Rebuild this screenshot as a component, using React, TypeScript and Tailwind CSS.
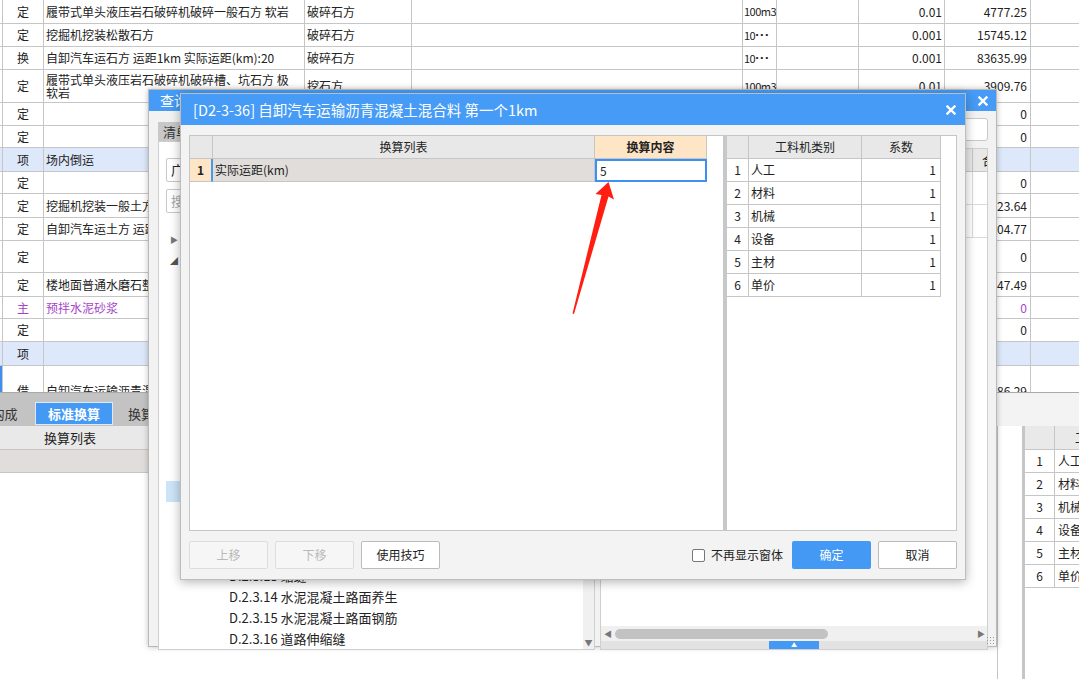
import React from "react";

type SheetRow = {
  t: string;
  name?: React.ReactNode;
  c3?: string;
  unit?: React.ReactNode;
  qty?: string;
  price?: string;
  h: string;
  blue?: boolean;
  purple?: boolean;
};

const dots = (
  <>
    10<span className="font-['Liberation_Sans',sans-serif] font-bold text-[13px] tracking-[0.5px]">···</span>
  </>
);

const sheetRows: SheetRow[] = [
  { t: "定", name: "履带式单头液压岩石破碎机破碎一般石方 软岩", c3: "破碎石方", unit: "100m3", qty: "0.01", price: "4777.25", h: "h-[24px]" },
  { t: "定", name: "挖掘机挖装松散石方", c3: "破碎石方", unit: dots, qty: "0.001", price: "15745.12", h: "h-[23px]" },
  { t: "换", name: "自卸汽车运石方 运距1km  实际运距(km):20", c3: "破碎石方", unit: dots, qty: "0.001", price: "83635.99", h: "h-[23px]" },
  {
    t: "定",
    name: (
      <span className="leading-[13px]">
        履带式单头液压岩石破碎机破碎槽、坑石方 极<br />软岩
      </span>
    ),
    c3: "挖石方",
    unit: "100m3",
    qty: "0.01",
    price: "3909.76",
    h: "h-[33px]",
  },
  { t: "定", price: "0", h: "h-[23px]" },
  { t: "定", price: "0", h: "h-[22px]" },
  { t: "项", name: "场内倒运", h: "h-[24px]", blue: true },
  { t: "定", price: "0", h: "h-[22px]" },
  { t: "定", name: "挖掘机挖装一般土方 三类土", price: "1523.64", h: "h-[24px]" },
  { t: "定", name: "自卸汽车运土方 运距1km", price: "1404.77", h: "h-[23px]" },
  { t: "定", price: "0", h: "h-[32px]" },
  { t: "定", name: "楼地面普通水磨石整体面层", price: "4147.49", h: "h-[24px]" },
  { t: "主", name: "预拌水泥砂浆", price: "0", h: "h-[22px]", purple: true },
  { t: "定", price: "0", h: "h-[23px]" },
  { t: "项", h: "h-[24px]", blue: true },
  { t: "借", name: "自卸汽车运输沥青混凝土混合料 第一个1km", price: "1986.29", h: "h-[50px]" },
];

function MainSheet() {
  return (
    <div className="h-[392px] overflow-hidden">
      {sheetRows.map((r, i) => (
        <div
          key={i}
          className={`${r.h} flex border-b border-[#c6c6c6] ${r.blue ? "bg-[#dde8fa]" : "bg-white"} ${r.purple ? "text-[#a445c8]" : "text-[#222]"}`}
        >
          <div className={`w-[3px] shrink-0 border-r border-[#c6c6c6] ${i === 15 ? "bg-[#3f8ff2]" : ""}`} />
          <div className="w-[41px] shrink-0 border-r border-[#c6c6c6] flex items-center justify-center">{r.t}</div>
          <div className="w-[261px] shrink-0 border-r border-[#c6c6c6] flex items-center pl-[2px] overflow-hidden whitespace-nowrap">{r.name}</div>
          <div className="w-[107px] shrink-0 border-r border-[#c6c6c6] flex items-center pl-[2px] whitespace-nowrap">{r.c3}</div>
          <div className="w-[331px] shrink-0 border-r border-[#c6c6c6]" />
          <div className="w-[34px] shrink-0 border-r border-[#c6c6c6] flex items-center pl-[1px] overflow-hidden whitespace-nowrap text-[11px] tracking-[-0.5px]">{r.unit}</div>
          <div className="w-[82px] shrink-0 border-r border-[#c6c6c6]" />
          <div className="w-[86px] shrink-0 border-r border-[#c6c6c6] flex items-center justify-end pr-[2px]">{r.qty}</div>
          <div className="w-[86px] shrink-0 border-r border-[#c6c6c6] flex items-center justify-end pr-[3px]">{r.price}</div>
          <div className="flex-1" />
        </div>
      ))}
    </div>
  );
}

const gljRows = ["人工", "材料", "机械", "设备", "主材", "单价"];

function BottomPanel() {
  return (
    <div className="h-[287px] flex border-t border-[#a9a9a9]">
      <div className="w-[997px] shrink-0 flex flex-col">
        <div className="h-[33px] bg-[#c3c3c3] flex items-end gap-[2px]">
          <div className="ml-[-24px] w-[57px] h-[23px] mb-[1px] flex items-center justify-center text-[13px] text-[#333]">构成</div>
          <div className="w-[78px] h-[23px] mb-[1px] bg-[#4499f5] border border-[#dfe9f5] flex items-center justify-center text-[13px] font-bold text-white">标准换算</div>
          <div className="w-[78px] h-[23px] mb-[1px] flex items-center justify-center text-[13px] text-[#333]">换算信息</div>
        </div>
        <div className="h-[24px] bg-[#e9e9e9] border-b border-[#c6c6c6] flex items-center">
          <div className="w-[140px] text-center text-[13px]">换算列表</div>
        </div>
        <div className="h-[23px] bg-[#e1ddda] border-b border-[#c6c6c6]" />
        <div className="flex-1 bg-white" />
      </div>
      <div className="flex-1 flex flex-col">
        <div className="h-[33px] bg-[#f3f3f3]" />
        <div className="flex-1 flex">
          <div className="w-[25px] bg-white border-l border-[#c6c6c6]" />
          <div className="flex-1 bg-white border-l-[3px] border-[#c6c6c6] overflow-hidden">
            <div className="h-[24px] bg-[#e9e9e9] border-b border-[#c6c6c6] flex">
              <div className="w-[30px] shrink-0 border-r border-[#c6c6c6]" />
              <div className="w-[100px] shrink-0 flex items-center justify-center whitespace-nowrap">工料机类别</div>
            </div>
            {gljRows.map((n, i) => (
              <div key={n} className="h-[23px] border-b border-[#c6c6c6] flex">
                <div className="w-[30px] shrink-0 border-r border-[#c6c6c6] flex items-center justify-center">{i + 1}</div>
                <div className="flex items-center pl-[3px] whitespace-nowrap">{n}</div>
              </div>
            ))}
          </div>
        </div>
      </div>
    </div>
  );
}

const treeItems = [
  "D.2.2 道路基层",
  "D.2.3 道路面层",
  "D.2.3.1 简易路面",
  "D.2.3.2 沥青表面处治",
  "D.2.3.3 沥青贯入式路面",
  "D.2.3.4 黑色碎石路面",
  "D.2.3.5 沥青混凝土路面",
  "D.2.3.6 沥青混凝土运输",
  "D.2.3.7 水泥混凝土路面",
  "D.2.3.8 伸缩缝",
  "D.2.3.9 锯缝机锯缝",
  "D.2.3.10 路面刻防滑槽",
  "D.2.3.11 传力杆",
  "D.2.3.12 拉杆",
  "D.2.3.13 缩缝",
  "D.2.3.14 水泥混凝土路面养生",
  "D.2.3.15 水泥混凝土路面钢筋",
  "D.2.3.16 道路伸缩缝",
];

function XIcon() {
  return (
    <svg width="10" height="10" viewBox="0 0 10 10" className="text-white">
      <path d="M1.5 1.5 L8.5 8.5 M8.5 1.5 L1.5 8.5" stroke="currentColor" strokeWidth="2.4" strokeLinecap="square" />
    </svg>
  );
}

function QueryDialog() {
  return (
    <div className="absolute left-[148px] top-[89px] w-[849px] h-[558px] bg-[#f2f2f2] border border-[#b8b8b8] shadow-[0_0_6px_rgba(0,0,0,0.25)] flex flex-col">
      <div className="h-[31px] bg-[#459bf6] flex items-center justify-between pl-[11px] pr-[8px] text-white text-[14px]">
        <span>查询定额</span>
        <XIcon />
      </div>
      <div className="flex-1 flex gap-[5px] pl-[9px] pr-[8px] pb-[11px]">
        <div className="w-[437px] shrink-0 flex flex-col">
          <div className="mt-[11px] h-[19px] flex">
            <div className="w-[80px] bg-[#c8c8c8] flex items-center pl-[5px] text-[13px] text-[#333]">清单指引</div>
          </div>
          <div className="flex-1 bg-white border border-[#cfcfcf] flex overflow-hidden">
            <div className="flex-1 px-[7px] pt-[16px] overflow-hidden">
              <div className="h-[24px] border border-[#c8c8c8] rounded-[2px] flex items-center pl-[4px] text-[13px] whitespace-nowrap">广东省市政工程综合定额(2018)</div>
              <div className="mt-[7px] h-[24px] border border-[#c8c8c8] rounded-[2px] flex items-center pl-[4px] text-[13px] text-[#aaa]">搜索</div>
              <div className="mt-[16px]">
                <div className="h-[21px] flex items-center pl-[4px] gap-[6px] text-[13px] whitespace-nowrap">
                  <span className="text-[8px] text-[#777]">▶</span>D.1 土石方工程
                </div>
                <div className="h-[21px] flex items-center pl-[4px] gap-[6px] text-[13px] whitespace-nowrap">
                  <span className="text-[8px] text-[#555]">◢</span>D.2 道路工程
                </div>
                {treeItems.map((t, i) => (
                  <div
                    key={t}
                    className={`h-[21px] flex items-center pl-[63px] text-[13px] whitespace-nowrap ${i === 10 ? "bg-[#cce4f7]" : ""}`}
                  >
                    {t}
                  </div>
                ))}
              </div>
            </div>
            <div className="w-[11px] shrink-0 bg-[#f0f0f0] flex flex-col justify-end items-center pb-[1px]">
              <span className="text-[8px] text-[#777] leading-[10px]">▼</span>
            </div>
          </div>
        </div>
        <div className="flex-1 flex flex-col">
          <div className="mt-[7px] h-[23px] flex justify-end">
            <div className="w-[220px] h-full bg-white border border-[#c8c8c8] rounded-[3px]" />
          </div>
          <div className="mt-[7px] flex-1 bg-white border border-[#cfcfcf] flex flex-col overflow-hidden">
            <div className="w-[calc(100%+26px)]">
              <div className="h-[23px] bg-[#e8e8e8] border-b border-[#c6c6c6] flex">
                <div className="flex-1 border-r border-[#c6c6c6]" />
                <div className="w-[40px] flex items-center pl-[9px] text-[13px]">合价</div>
              </div>
              {[0, 1].map((i) => (
                <div key={i} className="h-[33px] border-b border-[#dadada] flex">
                  <div className="flex-1 border-r border-[#dadada]" />
                  <div className="w-[40px]" />
                </div>
              ))}
            </div>
            <div className="flex-1" />
            <div className="h-[15px] bg-[#f0f0f0] flex items-center">
              <span className="w-[14px] text-center text-[8px] text-[#777]">◀</span>
              <div className="w-[213px] h-[10px] rounded-full bg-[#c2c2c2]" />
              <div className="flex-1" />
              <span className="w-[12px] text-center text-[8px] text-[#777]">▶</span>
            </div>
            <div className="h-[8px] bg-[#e2e2e2] flex">
              <div className="ml-[168px] w-[50px] h-full bg-[#4499f5] flex items-center justify-center">
                <span className="text-[6px] leading-[6px] text-white">▲</span>
              </div>
            </div>
          </div>
        </div>
      </div>
      <div className="absolute right-[2px] bottom-[2px] w-[8px] h-[8px] bg-[radial-gradient(#999_1px,transparent_1px)] bg-[length:3px_3px]" />
    </div>
  );
}

function ConvertDialog() {
  return (
    <div className="absolute left-[180px] top-[93px] w-[786px] h-[487px] bg-[#f3f3f3] border border-[#bdbdbd] shadow-[0_2px_10px_rgba(0,0,0,0.3)] flex flex-col">
      <div className="h-[31px] bg-[#459bf6] flex items-center justify-between pl-[12px] pr-[9px] text-white text-[14.5px]">
        <span>[D2-3-36] 自卸汽车运输沥青混凝土混合料 第一个1km</span>
        <XIcon />
      </div>
      <div className="px-[8px] pt-[10px]">
        <div className="h-[396px] flex">
          {/* left grid */}
          <div className="w-[535px] shrink-0 bg-white border border-[#c6c6c6]">
            <div className="h-[23px] flex">
              <div className="w-[23px] bg-[#e8e8e8] border-r border-b border-[#c6c6c6]" />
              <div className="w-[382px] bg-[#e8e8e8] border-r border-b border-[#c6c6c6] flex items-center justify-center">换算列表</div>
              <div className="w-[112px] bg-[#fde5c6] border-r border-b border-[#c6c6c6] flex items-center justify-center font-bold">换算内容</div>
            </div>
            <div className="h-[23px] flex">
              <div className="w-[23px] bg-[#fde5c6] border-r-2 border-r-[#4499f5] border-b border-b-[#c6c6c6] flex items-center justify-center font-bold">1</div>
              <div className="w-[382px] bg-[#e1ddda] border-r border-b border-[#c6c6c6] flex items-center pl-[2px]">实际运距(km)</div>
              <div className="w-[112px] bg-white border-2 border-[#3d8ff2] flex items-center pl-[3px]">5</div>
            </div>
          </div>
          {/* right grid */}
          <div className="flex-1 bg-white border-y border-r border-[#c6c6c6] border-l-[3px] border-l-[#c8c8c8]">
            <div className="h-[23px] flex">
              <div className="w-[22px] bg-[#e8e8e8] border-r border-b border-[#c6c6c6]" />
              <div className="w-[113px] bg-[#e8e8e8] border-r border-b border-[#c6c6c6] flex items-center justify-center">工料机类别</div>
              <div className="w-[79px] bg-[#e8e8e8] border-r border-b border-[#c6c6c6] flex items-center justify-center">系数</div>
            </div>
            {gljRows.map((n, i) => (
              <div key={n} className="h-[23px] flex">
                <div className="w-[22px] border-r border-b border-[#c6c6c6] flex items-center justify-center">{i + 1}</div>
                <div className="w-[113px] border-r border-b border-[#c6c6c6] flex items-center pl-[2px]">{n}</div>
                <div className="w-[79px] border-r border-b border-[#c6c6c6] flex items-center justify-end pr-[4px]">1</div>
              </div>
            ))}
          </div>
        </div>
        <div className="mt-[10px] h-[28px] flex items-center gap-[7px] text-[12px]">
          <div className="w-[79px] h-full border border-[#dddddd] rounded-[2px] bg-[#f6f6f6] text-[#b9b9b9] flex items-center justify-center">上移</div>
          <div className="w-[79px] h-full border border-[#dddddd] rounded-[2px] bg-[#f6f6f6] text-[#b9b9b9] flex items-center justify-center">下移</div>
          <div className="w-[79px] h-full border border-[#bbbbbb] rounded-[2px] bg-white text-[#222] flex items-center justify-center">使用技巧</div>
          <div className="flex-1" />
          <div className="flex items-center gap-[6px] mr-[2px]">
            <div className="w-[13px] h-[13px] border border-[#777] rounded-[2px] bg-white" />
            <span className="text-[#222]">不再显示窗体</span>
          </div>
          <div className="w-[79px] h-full rounded-[2px] bg-[#4499f5] text-white flex items-center justify-center">确定</div>
          <div className="w-[79px] h-full border border-[#bbbbbb] rounded-[2px] bg-white text-[#222] flex items-center justify-center">取消</div>
        </div>
      </div>
    </div>
  );
}

function RedArrow() {
  return (
    <svg className="absolute left-0 top-0 w-[1079px] h-[679px] pointer-events-none" viewBox="0 0 1079 679">
      <polygon
        points="608.5,182 614,199.5 608.5,196.5 574,314 572.5,313.5 601.5,195 595.5,194"
        fill="#ff1e10"
      />
    </svg>
  );
}

export default function App() {
  return (
    <div className="relative w-[1079px] h-[679px] overflow-hidden bg-white text-[12px] text-[#222] font-['Noto_Sans_CJK_SC','Noto_Sans',sans-serif]">
      <MainSheet />
      <BottomPanel />
      <QueryDialog />
      <ConvertDialog />
      <RedArrow />
    </div>
  );
}
